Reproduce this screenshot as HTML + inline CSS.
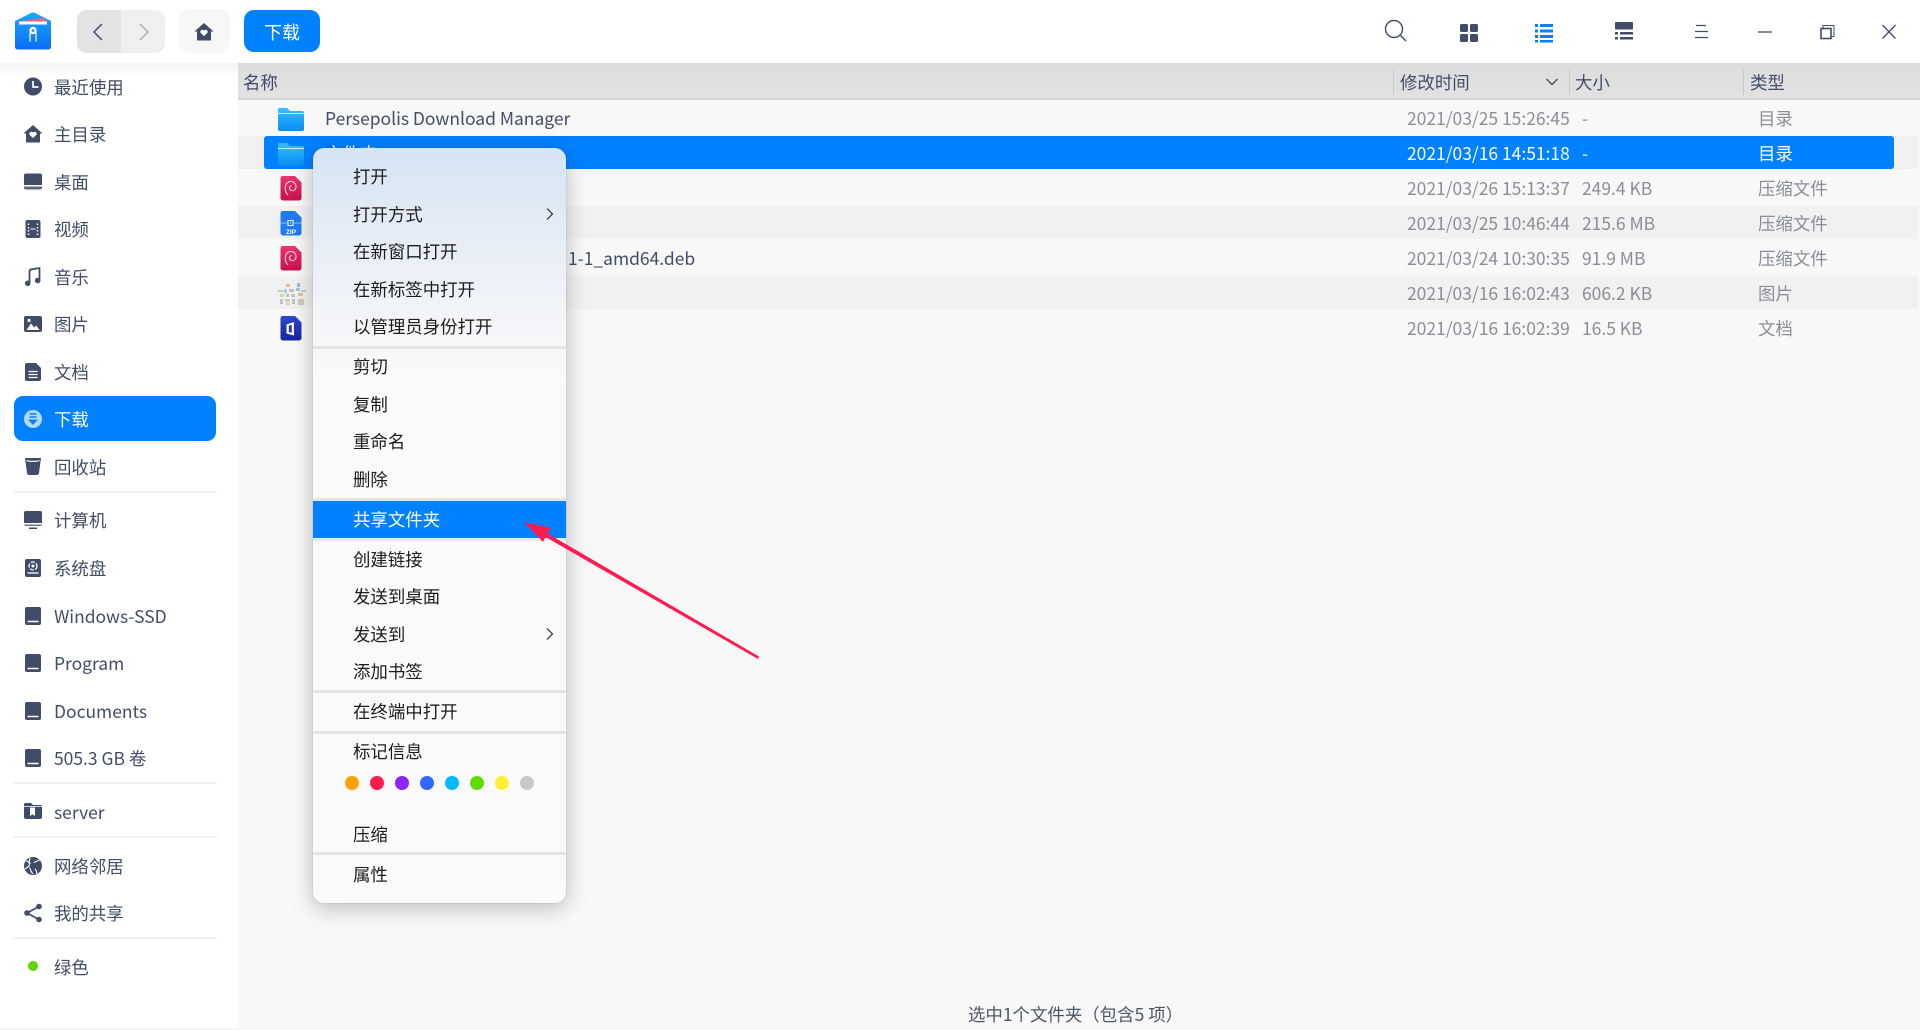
<!DOCTYPE html>
<html lang="zh"><head><meta charset="utf-8"><title>下载</title>
<style>
html,body{margin:0;padding:0;width:1920px;height:1030px;overflow:hidden;background:#fff}
body{position:relative;font-family:"Noto Sans CJK SC","Liberation Sans",sans-serif;font-size:17.45px;color:#414d68}
.a{position:absolute}
.t{position:absolute;white-space:nowrap;line-height:24px;margin-top:1px}
.s{left:54px}
.i{position:absolute;left:21px;width:24px;height:24px;fill:#414d68}
.sep{position:absolute;left:13px;width:204px;height:2px;background:#f0f0f0}
.d{color:#8a8e98;left:1407px}.z{color:#8a8e98;left:1582px}.y{color:#8a8e98;left:1758px}
.m{left:353px;color:#1c1c1c}
.ms{position:absolute;left:0;width:253px;height:3px;background:#e4e4e4}
.dot{position:absolute;top:776px;width:14px;height:14px;border-radius:50%}
.h{color:#414d68;top:70px}
.cs{position:absolute;top:69px;width:1px;height:26px;background:#c9c9c9}
</style></head><body>

<!-- main area -->
<div class="a" style="left:238px;top:63px;width:1682px;height:967px;background:#f8f8f8"></div>
<div class="a" style="left:238px;top:63px;width:1682px;height:35px;background:linear-gradient(#dcdcdc,#e2e2e2)"></div>
<div class="a" style="left:238px;top:98px;width:1682px;height:2px;background:#d2d2d2"></div>
<div class="cs" style="left:1393px"></div><div class="cs" style="left:1569px"></div><div class="cs" style="left:1743px"></div>
<div class="a" style="left:0;top:63px;width:238px;height:14px;background:linear-gradient(#f4f4f4,#fff)"></div>
<div class="t h" style="left:243px">名称</div>
<div class="t h" style="left:1400px">修改时间</div>
<svg class="a" style="left:1545px;top:76px" width="14" height="12"><path d="M1.5 3 7 8.5 12.5 3" fill="none" stroke="#414d68" stroke-width="1.4"/></svg>
<div class="t h" style="left:1575px">大小</div>
<div class="t h" style="left:1750px">类型</div>

<!-- zebra -->
<div class="a" style="left:238px;top:136px;width:1680px;height:33px;background:#f1f1f1"></div>
<div class="a" style="left:238px;top:206px;width:1680px;height:33px;background:#f1f1f1"></div>
<div class="a" style="left:238px;top:276px;width:1680px;height:33px;background:#f1f1f1"></div>
<div class="a" style="left:264px;top:136px;width:1630px;height:33px;background:#0081ff;border-radius:3px"></div>

<!-- file icons -->
<svg class="a" style="left:276px;top:106px" width="30" height="27" viewBox="0 0 30 27"><defs><linearGradient id="f" x1="0" y1="0" x2="0" y2="1"><stop offset="0" stop-color="#31c0ff"/><stop offset="1" stop-color="#0a8cf5"/></linearGradient></defs><path d="M2 4a2 2 0 0 1 2-2h7l3 3h12a2 2 0 0 1 2 2v16a2 2 0 0 1-2 2H4a2 2 0 0 1-2-2z" fill="url(#f)"/><path d="M2 7.5h26" stroke="#c8efff" stroke-width="1"/></svg>
<svg class="a" style="left:276px;top:141px" width="30" height="27" viewBox="0 0 30 27"><path d="M2 4a2 2 0 0 1 2-2h7l3 3h12a2 2 0 0 1 2 2v16a2 2 0 0 1-2 2H4a2 2 0 0 1-2-2z" fill="url(#f)"/><path d="M2 7.5h26" stroke="#c8efff" stroke-width="1"/></svg>
<svg class="a" style="left:280px;top:176px" width="22" height="25" viewBox="0 0 22 25"><defs><linearGradient id="db" x1="0" y1="0" x2="0" y2="1"><stop offset="0" stop-color="#e8346f"/><stop offset="1" stop-color="#c8104e"/></linearGradient></defs><path d="M2.5 0H15l6.500 6.500V22a2.500 2.500 0 0 1-2.500 2.500H3A2.500 2.500 0 0 1 .5 22V2.500A2.500 2.500 0 0 1 2.500 0z" fill="url(#db)"/><path d="M8 19C4 15 4.500 8 8.500 6c3.500-1.700 7.500.8 7.500 4.500s-3.500 5-5.500 3.500-.8-4.500 1.200-4.300" fill="none" stroke="#ffd0de" stroke-width="1.100"/></svg>
<svg class="a" style="left:280px;top:211px" width="22" height="25" viewBox="0 0 22 25"><path d="M2.500 0H15l6.500 6.500V22a2.500 2.500 0 0 1-2.500 2.500H3A2.500 2.500 0 0 1 .5 22V2.500A2.500 2.500 0 0 1 2.500 0z" fill="#1f7bf2"/><path d="M.5 12h21" stroke="#8fc1ff" stroke-width="1"/><rect x="8" y="9.500" width="5" height="5" fill="#1f7bf2" stroke="#fff" stroke-width="1"/><rect x="10" y="11.500" width="1" height="1" fill="#fff"/><text x="11" y="22.800" text-anchor="middle" font-family="Liberation Sans,sans-serif" font-size="6.500" font-weight="700" fill="#fff">ZIP</text></svg>
<svg class="a" style="left:280px;top:246px" width="22" height="25" viewBox="0 0 22 25"><path d="M2.500 0H15l6.500 6.500V22a2.500 2.500 0 0 1-2.500 2.500H3A2.500 2.500 0 0 1 .5 22V2.500A2.500 2.500 0 0 1 2.500 0z" fill="url(#db)"/><path d="M8 19C4 15 4.500 8 8.500 6c3.500-1.700 7.500.8 7.500 4.500s-3.500 5-5.500 3.500-.8-4.500 1.200-4.300" fill="none" stroke="#ffd0de" stroke-width="1.100"/></svg>
<svg class="a" style="left:277px;top:283px" width="30" height="24" viewBox="0 0 30 24"><g opacity=".75"><rect x="9" y="1" width="4" height="3" fill="#e8a878"/><rect x="20" y="0" width="3" height="4" fill="#7aa7d8"/><rect x="1" y="7" width="5" height="2" fill="#9cc8a0"/><rect x="7" y="6" width="3" height="4" fill="#88c4c8"/><rect x="12" y="6" width="5" height="3" fill="#b8a8d0"/><rect x="19" y="5" width="4" height="3" fill="#88b8d8"/><rect x="24" y="7" width="5" height="2" fill="#a8c8a8"/><rect x="3" y="11" width="4" height="3" fill="#d8c890"/><rect x="9" y="11" width="3" height="3" fill="#c0a8c8"/><rect x="14" y="11" width="4" height="3" fill="#a0c0a8"/><rect x="21" y="10" width="5" height="3" fill="#d0b090"/><rect x="3" y="16" width="3" height="5" fill="#a8b8c8"/><rect x="8" y="16" width="5" height="3" fill="#c8c090"/><rect x="15" y="16" width="3" height="5" fill="#a0b8c0"/><rect x="21" y="16" width="6" height="6" fill="#d0b8a0"/><rect x="9" y="20" width="4" height="2" fill="#b8c8a0"/></g></svg>
<svg class="a" style="left:280px;top:316px" width="22" height="25" viewBox="0 0 22 25"><defs><linearGradient id="of" x1="0" y1="0" x2="0" y2="1"><stop offset="0" stop-color="#2f46c8"/><stop offset="1" stop-color="#1824a6"/></linearGradient></defs><path d="M2.500 0H15l6.500 6.500V22a2.500 2.500 0 0 1-2.500 2.500H3A2.500 2.500 0 0 1 .5 22V2.500A2.500 2.500 0 0 1 2.500 0z" fill="url(#of)"/><path d="M6.500 8.500l7.500-2.500V19.500l-7.500-2zM8.800 9.800v6.300l2.900.7V8.800z" fill="#fff" fill-rule="evenodd"/></svg>

<!-- file rows -->
<div class="t" style="left:325px;top:106px">Persepolis Download Manager</div>
<div class="t" style="left:325px;top:141px;color:#fff">文件夹</div>
<div class="t" style="left:568px;top:246px">1-1_amd64.deb</div>

<div class="t d" style="top:106px">2021/03/25 15:26:45</div><div class="t z" style="top:106px">-</div><div class="t y" style="top:106px">目录</div>
<div class="t d" style="top:141px;color:#fff">2021/03/16 14:51:18</div><div class="t z" style="top:141px;color:#fff">-</div><div class="t y" style="top:141px;color:#fff">目录</div>
<div class="t d" style="top:176px">2021/03/26 15:13:37</div><div class="t z" style="top:176px">249.4 KB</div><div class="t y" style="top:176px">压缩文件</div>
<div class="t d" style="top:211px">2021/03/25 10:46:44</div><div class="t z" style="top:211px">215.6 MB</div><div class="t y" style="top:211px">压缩文件</div>
<div class="t d" style="top:246px">2021/03/24 10:30:35</div><div class="t z" style="top:246px">91.9 MB</div><div class="t y" style="top:246px">压缩文件</div>
<div class="t d" style="top:281px">2021/03/16 16:02:43</div><div class="t z" style="top:281px">606.2 KB</div><div class="t y" style="top:281px">图片</div>
<div class="t d" style="top:316px">2021/03/16 16:02:39</div><div class="t z" style="top:316px">16.5 KB</div><div class="t y" style="top:316px">文档</div>

<div class="t" style="left:968px;top:1002px;color:#4c5568">选中1个文件夹（包含5 项）</div>

<!-- toolbar -->
<svg class="a" style="left:13px;top:10px" width="40" height="42" viewBox="0 0 40 42"><defs><linearGradient id="lg" x1="0" y1="0" x2="0" y2="1"><stop offset="0" stop-color="#1ba8ff"/><stop offset="1" stop-color="#0a6cf6"/></linearGradient></defs><path d="M2 11 17.500 3.200a5.500 5.500 0 0 1 5 0L38 11v26a2.500 2.500 0 0 1-2.500 2.500h-31A2.500 2.500 0 0 1 2 37z" fill="url(#lg)"/><path d="M6 11.500h28v3H6z" fill="#fff"/><path d="M6 11.500 30 8l4 3.500z" fill="#ff6176"/><circle cx="20" cy="20.500" r="3.700" fill="#fff"/><circle cx="20" cy="20.500" r="1.400" fill="#1a8cff"/><path d="M17 22.500v9M23 22.500v9" stroke="#fff" stroke-width="1.200" fill="none"/></svg>

<div class="a" style="left:77px;top:10px;width:44px;height:43px;background:#e3e3e5;border-radius:10px 0 0 10px"></div>
<div class="a" style="left:121px;top:10px;width:44px;height:43px;background:#efefef;border-radius:0 10px 10px 0"></div>
<svg class="a" style="left:91px;top:22px" width="14" height="20"><path d="M11 2 3 10l8 8" fill="none" stroke="#414d68" stroke-width="1.500"/></svg>
<svg class="a" style="left:137px;top:22px" width="14" height="20"><path d="M3 2l8 8-8 8" fill="none" stroke="#a9adb8" stroke-width="1.500"/></svg>
<div class="a" style="left:179px;top:9px;width:51px;height:44px;background:#f7f7f7;border-radius:10px"></div>
<svg class="a" style="left:192px;top:20px;fill:#414d68" width="24" height="24" viewBox="0 0 24 24"><path d="M12 3l9.500 8.500H19V20.500H5V11.500H2.500z"/><path d="M12 16l-3.500-3.300a2.100 2.100 0 0 1 3.500-2.200 2.100 2.100 0 0 1 3.500 2.200z" fill="#fff"/></svg>
<div class="a" style="left:244px;top:10px;width:76px;height:42px;background:#0081ff;border-radius:10px"></div>
<div class="t" style="left:244px;top:20px;width:76px;text-align:center;color:#fff;font-size:18px;margin-top:0">下载</div>

<svg class="a" style="left:1380px;top:10px" width="540" height="40" fill="none" stroke="#414d68">
<circle cx="14" cy="19" r="8.500" stroke-width="1.400"/><path d="M20.500 25.500 26 31" stroke-width="1.500"/>
<g fill="#414d68" stroke="none"><rect x="80" y="14" width="8" height="8" rx="1.500"/><rect x="90" y="14" width="8" height="8" rx="1.500"/><rect x="80" y="24" width="8" height="8" rx="1.500"/><rect x="90" y="24" width="8" height="8" rx="1.500"/></g>
<g fill="#0081ff" stroke="none"><rect x="155" y="14" width="3" height="3"/><rect x="160" y="14" width="13" height="3"/><rect x="155" y="19.500" width="3" height="3"/><rect x="160" y="19.500" width="13" height="3"/><rect x="155" y="25" width="3" height="3"/><rect x="160" y="25" width="13" height="3"/><rect x="155" y="30" width="3" height="2.500"/><rect x="160" y="30" width="13" height="2.500"/></g>
<g fill="#414d68" stroke="none"><rect x="235" y="12" width="18" height="7.500" rx="1"/><rect x="235" y="22" width="3" height="2.500"/><rect x="240" y="22" width="13" height="2.500"/><rect x="235" y="27" width="3" height="2.500"/><rect x="240" y="27" width="13" height="2.500"/></g>
<path d="M316 15.500h10M315 21.500h13M315 27.500h13" stroke-width="1.200"/>
<path d="M378 22h14" stroke-width="1.300"/>
<path d="M444 19h-1v-3.500h11v11h-3" stroke-width="1" /><rect x="441" y="18.500" width="10" height="10" stroke-width="1.600"/>
<path d="M502.500 15l13 13.500M515.500 15l-13 13.500" stroke-width="1.300"/>
</svg>

<!-- sidebar -->
<svg class="i" style="top:75px" viewBox="0 0 24 24"><circle cx="12" cy="11.500" r="9"/><path d="M12 6v6h5.500" fill="none" stroke="#fff" stroke-width="1.700"/></svg><div class="t s" style="top:74.500px">最近使用</div>
<svg class="i" style="top:122px" viewBox="0 0 24 24"><path d="M12 3l9.500 8.500H19V20.500H5V11.500H2.500z"/><path d="M12 16l-3.500-3.300a2.100 2.100 0 0 1 3.500-2.200 2.100 2.100 0 0 1 3.500 2.200z" fill="#fff"/></svg><div class="t s" style="top:122px">主目录</div>
<svg class="i" style="top:170px" viewBox="0 0 24 24"><path d="M3 5.500A2 2 0 0 1 5 3.500h14a2 2 0 0 1 2 2V15H3z"/><path d="M3 16.500h18v1a2 2 0 0 1-2 2H5a2 2 0 0 1-2-2z" opacity=".85"/></svg><div class="t s" style="top:170px">桌面</div>
<svg class="i" style="top:217px" viewBox="0 0 24 24"><rect x="4.500" y="3" width="15" height="18" rx="2"/><path d="M7.500 6.500v1.500M7.500 10v1.500M7.500 13v1.500M7.500 16.500v1.500M16.500 6.500v1.500M16.500 10v1.500M16.500 13v1.500M16.500 16.500v1.500" stroke="#fff" stroke-width="1.500"/><path d="M9.500 12h5" stroke="#fff" stroke-width="1"/></svg><div class="t s" style="top:217px">视频</div>
<svg class="i" style="top:265px" viewBox="0 0 24 24"><path d="M8.500 18V6.500c0-1.500 1-2 2-2.200l8-1.300V15" fill="none" stroke="#414d68" stroke-width="1.800"/><circle cx="6.700" cy="18.300" r="2.800"/><circle cx="16.700" cy="15.500" r="2.800"/></svg><div class="t s" style="top:265px">音乐</div>
<svg class="i" style="top:312px" viewBox="0 0 24 24"><rect x="3" y="4" width="18" height="16" rx="2"/><path d="M5.500 18l4.500-6.500 3.200 4 2-2 3.300 4.500z" fill="#fff"/><circle cx="8" cy="8.500" r="1.600" fill="#fff"/></svg><div class="t s" style="top:312px">图片</div>
<svg class="i" style="top:360px" viewBox="0 0 24 24"><path d="M6 3h9l5 5v11a2 2 0 0 1-2 2H6a2 2 0 0 1-2-2V5a2 2 0 0 1 2-2z"/><path d="M7.500 11.500h9M7.500 14.500h9M7.500 17.500h9" stroke="#fff" stroke-width="1.200"/></svg><div class="t s" style="top:360px">文档</div>

<div class="a" style="left:14px;top:396px;width:202px;height:45px;background:#0081ff;border-radius:9px"></div>
<svg class="i" style="top:407px" viewBox="0 0 24 24"><circle cx="12" cy="12" r="9" fill="#b3d9ff"/><path d="M8.500 7h7M8.500 10h7" stroke="#0081ff" stroke-width="1.500"/><path d="M7 12.500h10L12 18z" fill="#0081ff"/></svg><div class="t s" style="top:407px;color:#fff">下载</div>

<svg class="i" style="top:454px" viewBox="0 0 24 24"><path d="M4 4h16l-2 15a2.500 2.500 0 0 1-2.500 2h-7A2.500 2.500 0 0 1 6 19z"/><path d="M5.500 6.500c3 1.200 10 1.200 13 0" stroke="#fff" stroke-width="1.200" fill="none"/></svg><div class="t s" style="top:455px">回收站</div>
<div class="sep" style="top:491px"></div>
<svg class="i" style="top:508px" viewBox="0 0 24 24"><path d="M3 5a2 2 0 0 1 2-2h14a2 2 0 0 1 2 2v10H3z"/><path d="M3 16.500h18a2 2 0 0 1-2 1.500H5a2 2 0 0 1-2-1.500z" opacity=".8"/><rect x="8" y="19.500" width="8" height="1.500"/></svg><div class="t s" style="top:508px">计算机</div>
<svg class="i" style="top:556px" viewBox="0 0 24 24"><path d="M6 3h12a2 2 0 0 1 2 2v14a2 2 0 0 1-2 2H6a2 2 0 0 1-2-2V5a2 2 0 0 1 2-2z"/><circle cx="12" cy="10" r="4" fill="none" stroke="#fff" stroke-width="1.300" stroke-dasharray="4 1.500"/><circle cx="12" cy="10" r="1.500" fill="#fff"/><path d="M6.500 17h11" stroke="#fff" stroke-width="1.300"/></svg><div class="t s" style="top:556px">系统盘</div>
<svg class="i" style="top:604px" viewBox="0 0 24 24"><path d="M6 3h12a2 2 0 0 1 2 2v14a2 2 0 0 1-2 2H6a2 2 0 0 1-2-2V5a2 2 0 0 1 2-2z"/><path d="M6.500 17.500h11" stroke="#fff" stroke-width="1.500"/></svg><div class="t s" style="top:604px">Windows-SSD</div>
<svg class="i" style="top:651px" viewBox="0 0 24 24"><path d="M6 3h12a2 2 0 0 1 2 2v14a2 2 0 0 1-2 2H6a2 2 0 0 1-2-2V5a2 2 0 0 1 2-2z"/><path d="M6.500 17.500h11" stroke="#fff" stroke-width="1.500"/></svg><div class="t s" style="top:651px">Program</div>
<svg class="i" style="top:699px" viewBox="0 0 24 24"><path d="M6 3h12a2 2 0 0 1 2 2v14a2 2 0 0 1-2 2H6a2 2 0 0 1-2-2V5a2 2 0 0 1 2-2z"/><path d="M6.500 17.500h11" stroke="#fff" stroke-width="1.500"/></svg><div class="t s" style="top:699px">Documents</div>
<svg class="i" style="top:746px" viewBox="0 0 24 24"><path d="M6 3h12a2 2 0 0 1 2 2v14a2 2 0 0 1-2 2H6a2 2 0 0 1-2-2V5a2 2 0 0 1 2-2z"/><path d="M6.500 17.500h11" stroke="#fff" stroke-width="1.500"/></svg><div class="t s" style="top:746px">505.3 GB 卷</div>
<div class="sep" style="top:782px"></div>
<svg class="i" style="top:799px" viewBox="0 0 24 24"><path d="M3 5.500A1.500 1.500 0 0 1 4.500 4H10l2 2h7.500A1.500 1.500 0 0 1 21 7.500V18a2 2 0 0 1-2 2H5a2 2 0 0 1-2-2z"/><path d="M9 8.500h5V17l-2.500-1.800L9 17z" fill="#fff"/><path d="M3 7.500h18" stroke="#fff" stroke-width=".8"/></svg><div class="t s" style="top:800px">server</div>
<div class="sep" style="top:836px"></div>
<svg class="i" style="top:854px" viewBox="0 0 24 24"><circle cx="12" cy="12" r="9"/><path d="M5 7c4 1 10 6 11 13M4 15c4-3 10-8 15-9M9 4c-2 5 0 13 3 16" fill="none" stroke="#fff" stroke-width="1.100"/><circle cx="12" cy="12" r="3.500" fill="#414d68"/></svg><div class="t s" style="top:854px">网络邻居</div>
<svg class="i" style="top:901px" viewBox="0 0 24 24"><circle cx="18" cy="5.500" r="2.800"/><circle cx="6" cy="12" r="2.800"/><circle cx="18" cy="18.500" r="2.800"/><path d="M18 5.500 6 12l12 6.500" fill="none" stroke="#414d68" stroke-width="1.800"/></svg><div class="t s" style="top:900.500px">我的共享</div>
<div class="sep" style="top:937px"></div>
<div class="a" style="left:28px;top:961px;width:10px;height:10px;border-radius:50%;background:#5ed500"></div><div class="t s" style="top:955px">绿色</div>
<div class="a" style="left:0;top:1028px;width:238px;height:2px;background:#f7f7f7"></div>

<!-- context menu -->
<div class="a" style="left:313px;top:148px;width:253px;height:755px;border-radius:11px;background:linear-gradient(#d5e4f4 0,#e6edf6 90px,#f6f7f9 190px,#fafafa 240px);box-shadow:0 5px 22px rgba(0,0,0,.25),0 0 1px rgba(0,0,0,.3)">
<div class="ms" style="top:198px"></div>
<div class="ms" style="top:350px"></div>
<div class="a" style="left:0;top:353px;width:253px;height:37px;background:#0081ff"></div>
<div class="a" style="left:0;top:390px;width:253px;height:3px;background:#e9e9e9"></div>
<div class="ms" style="top:542px"></div>
<div class="ms" style="top:583px"></div>
<div class="ms" style="top:704px"></div>
</div>
<div class="t m" style="top:164px">打开</div>
<div class="t m" style="top:202px">打开方式</div>
<svg class="a" style="left:545px;top:206px" width="10" height="16"><path d="M2 2.500 7.500 8 2 13.500" fill="none" stroke="#222" stroke-width="1.100"/></svg>
<div class="t m" style="top:239px">在新窗口打开</div>
<div class="t m" style="top:277px">在新标签中打开</div>
<div class="t m" style="top:314px">以管理员身份打开</div>
<div class="t m" style="top:354px">剪切</div>
<div class="t m" style="top:392px">复制</div>
<div class="t m" style="top:429px">重命名</div>
<div class="t m" style="top:467px">删除</div>
<div class="t m" style="top:507px;color:#fff">共享文件夹</div>
<div class="t m" style="top:547px">创建链接</div>
<div class="t m" style="top:584px">发送到桌面</div>
<div class="t m" style="top:622px">发送到</div>
<svg class="a" style="left:545px;top:626px" width="10" height="16"><path d="M2 2.500 7.500 8 2 13.500" fill="none" stroke="#222" stroke-width="1.100"/></svg>
<div class="t m" style="top:659px">添加书签</div>
<div class="t m" style="top:699px">在终端中打开</div>
<div class="t m" style="top:739px">标记信息</div>
<div class="dot" style="left:345px;background:#ffa100"></div>
<div class="dot" style="left:370px;background:#ff1b50"></div>
<div class="dot" style="left:395px;background:#9023fc"></div>
<div class="dot" style="left:420px;background:#3069ff"></div>
<div class="dot" style="left:445px;background:#00bbff"></div>
<div class="dot" style="left:470px;background:#5edb00"></div>
<div class="dot" style="left:495px;background:#fff02f"></div>
<div class="dot" style="left:520px;background:#c8c8c8"></div>
<div class="t m" style="top:822px">压缩</div>
<div class="t m" style="top:862px">属性</div>

<!-- arrow -->
<svg class="a" style="left:500px;top:500px" width="280" height="180"><path d="M24 22 51 28 47.500 33.500 259 156.500 258 159 45.500 37 43 42z" fill="#ff1a50"/></svg>
</body></html>
